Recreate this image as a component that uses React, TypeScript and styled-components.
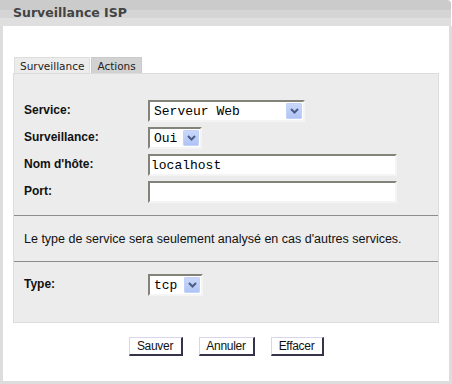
import React from "react";
import styled, { createGlobalStyle } from "styled-components";

const GlobalStyle = createGlobalStyle`
  html, body {
    margin: 0;
    padding: 0;
    background: #fff;
  }
  * {
    box-sizing: border-box;
  }
`;

const Window = styled.div`
  width: 452px;
  height: 384px;
  display: flex;
  flex-direction: column;
  background: #fff;
`;

const Header = styled.div`
  height: 26px;
  display: flex;
  align-items: flex-start;
  padding: 5px 0 0 13px;
  border-top-right-radius: 4px;
  background: linear-gradient(
    #cbcbcb 0,
    #cbcbcb 10px,
    #d5d5d5 10px,
    #d5d5d5 18px,
    #dfdfdf 18px,
    #dfdfdf 26px
  );
  width: 451px;
`;

const Title = styled.h1`
  margin: 0;
  font-family: "DejaVu Sans", Verdana, sans-serif;
  font-weight: bold;
  font-size: 12.5px;
  line-height: 15px;
  color: #444;
`;

const Body = styled.div`
  flex: 1;
  width: 452px;
  border: 3px solid #dddddd;
  border-top: none;
  padding: 31px 10px 0 10px;
  display: flex;
  flex-direction: column;
`;

const TabBar = styled.div`
  display: flex;
  gap: 1px;
  padding-left: 1px;
`;

const Tab = styled.div<{ $active?: boolean }>`
  height: 16px;
  padding: 0 5px;
  display: flex;
  align-items: center;
  font-family: "DejaVu Sans", Verdana, sans-serif;
  font-size: 10.5px;
  color: #222;
  background: ${(p) => (p.$active ? "#ececec" : "#d2d2d2")};
  border: 1px solid ${(p) => (p.$active ? "#dedede" : "#cacaca")};
  border-bottom: none;
`;

const Panel = styled.div`
  background: #ececec;
  border: 1px solid #dcdcdc;
  display: flex;
  flex-direction: column;
`;

const FormGrid = styled.div`
  display: grid;
  grid-template-columns: 124px 1fr;
  grid-auto-rows: 22px;
  row-gap: 5px;
  padding: 26px 0 12px 10px;
`;

const Section = styled.div`
  padding: 12px 0 26px 10px;
  display: grid;
  grid-template-columns: 124px 1fr;
  grid-auto-rows: 22px;
`;

const Label = styled.label`
  font-family: "Liberation Sans", Arial, sans-serif;
  font-weight: bold;
  font-size: 12px;
  line-height: 14px;
  padding-top: 3px;
  color: #111;
`;

const Sunken = styled.div<{ $width: number }>`
  width: ${(p) => p.$width}px;
  height: 22px;
  background: #fff;
  border-style: solid;
  border-width: 2px;
  border-color: #83837a #f4f4f4 #f4f4f4 #83837a;
  display: flex;
  align-items: center;
  font-family: "Liberation Mono", "Courier New", monospace;
  font-size: 13px;
  color: #000;
`;

const SelectText = styled.span`
  flex: 1;
  padding-left: 4px;
  padding-top: 1px;
`;

const InputText = styled.span`
  padding-left: 1px;
  padding-top: 1px;
`;

const ArrowBox = styled.span`
  width: 16px;
  height: 16px;
  margin-right: 1px;
  display: flex;
  align-items: center;
  justify-content: center;
  background: linear-gradient(#c9d8fb, #afc4f4);
  border: 1px solid #c2d2f6;
  border-radius: 1px;
`;

const Divider = styled.div`
  height: 1px;
  background: #8c8c8c;
`;

const Info = styled.p`
  margin: 0;
  height: 45px;
  padding-left: 10px;
  display: flex;
  align-items: center;
  font-family: "Liberation Sans", Arial, sans-serif;
  font-size: 12.5px;
  color: #111;
`;

const ButtonRow = styled.div`
  display: flex;
  justify-content: center;
  gap: 16px;
  margin-top: 14px;
`;

const Button = styled.button<{ $width: number }>`
  width: ${(p) => p.$width}px;
  height: 19px;
  padding: 0;
  background: #fff;
  border-style: solid;
  border-width: 1px 2px 2px 1px;
  border-color: #d9d5ec #34334a #34334a #d9d5ec;
  font-family: "Liberation Sans", Arial, sans-serif;
  font-size: 12px;
  letter-spacing: -0.3px;
  color: #111;
`;

function Chevron() {
  return (
    <svg width="9" height="6" viewBox="0 0 9 6">
      <path d="M1 1 L4.5 4.5 L8 1" fill="none" stroke="#4b5c86" strokeWidth="2" />
    </svg>
  );
}

function Select({ value, width }: { value: string; width: number }) {
  return (
    <Sunken $width={width}>
      <SelectText>{value}</SelectText>
      <ArrowBox>
        <Chevron />
      </ArrowBox>
    </Sunken>
  );
}

function Input({ value }: { value: string }) {
  return (
    <Sunken $width={249}>
      <InputText>{value}</InputText>
    </Sunken>
  );
}

export default function App() {
  return (
    <>
      <GlobalStyle />
      <Window>
        <Header>
          <Title>Surveillance ISP</Title>
        </Header>
        <Body>
          <TabBar>
            <Tab $active>Surveillance</Tab>
            <Tab>Actions</Tab>
          </TabBar>
          <Panel>
            <FormGrid>
              <Label>Service:</Label>
              <Select value="Serveur Web" width={157} />
              <Label>Surveillance:</Label>
              <Select value="Oui" width={54} />
              <Label>Nom d'hôte:</Label>
              <Input value="localhost" />
              <Label>Port:</Label>
              <Input value="" />
            </FormGrid>
            <Divider />
            <Info>Le type de service sera seulement analysé en cas d'autres services.</Info>
            <Divider />
            <Section>
              <Label>Type:</Label>
              <Select value="tcp" width={55} />
            </Section>
          </Panel>
          <ButtonRow>
            <Button $width={54}>Sauver</Button>
            <Button $width={56}>Annuler</Button>
            <Button $width={53}>Effacer</Button>
          </ButtonRow>
        </Body>
      </Window>
    </>
  );
}
